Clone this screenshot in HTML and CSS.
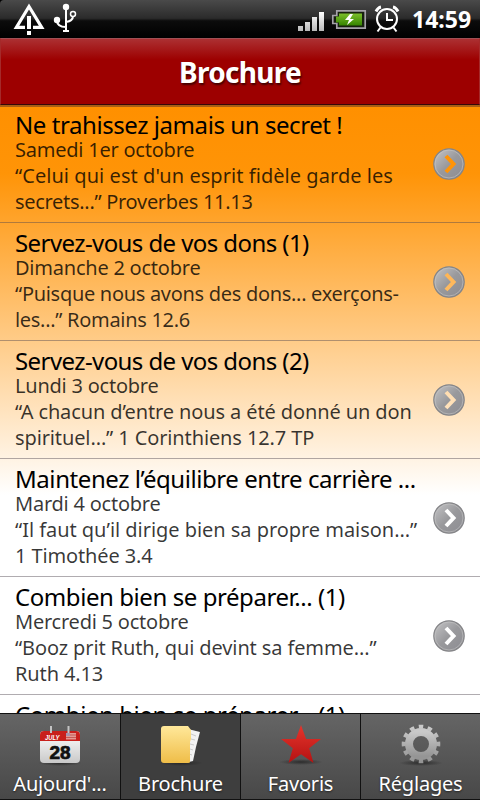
FILE: index.html
```html
<!DOCTYPE html>
<html lang="fr">
<head>
<meta charset="utf-8">
<title>Brochure</title>
<link rel="stylesheet" href="styles.css">
</head>
<body>
<svg class="defs" width="0" height="0" aria-hidden="true">
  <defs>
    <linearGradient id="disc" x1="0" y1="0" x2="1" y2="1"><stop offset="0" stop-color="#c6c6c8"/><stop offset=".5" stop-color="#99999c"/><stop offset="1" stop-color="#8c8c92"/></linearGradient>
    <linearGradient id="bars" x1="0" y1="0" x2="0" y2="1"><stop offset="0" stop-color="#fff"/><stop offset="1" stop-color="#b8b8b8"/></linearGradient>
    <linearGradient id="green" x1="0" y1="0" x2="0" y2="1"><stop offset="0" stop-color="#7cbf2c"/><stop offset="1" stop-color="#358400"/></linearGradient>
    <linearGradient id="folder" x1="0" y1="0" x2="0" y2="1"><stop offset="0" stop-color="#ffe89a"/><stop offset="1" stop-color="#efbd48"/></linearGradient>
    <linearGradient id="star" x1="0" y1="0" x2="0" y2="1"><stop offset="0" stop-color="#e5352c"/><stop offset="1" stop-color="#b51212"/></linearGradient>
    <linearGradient id="gear" x1="0" y1="0" x2="0" y2="1"><stop offset="0" stop-color="#c9c9c9"/><stop offset="1" stop-color="#959595"/></linearGradient>
    <linearGradient id="page" x1="0" y1="0" x2="0" y2="1"><stop offset="0" stop-color="#fff"/><stop offset="1" stop-color="#c9c9c9"/></linearGradient>
    <radialGradient id="shade"><stop offset="0" stop-color="#222" stop-opacity=".8"/><stop offset="1" stop-color="#222" stop-opacity="0"/></radialGradient>
    <mask id="cut"><rect width="34" height="34" fill="#fff"/><path d="M14 9 21.500 17 14 25" fill="none" stroke="#000" stroke-width="4"/></mask>
    <symbol id="arrow" viewBox="0 0 34 34"><g mask="url(#cut)"><circle cx="17" cy="17" r="15.2" fill="url(#disc)" stroke="#858588" stroke-width="1.2"/><circle cx="17" cy="17" r="14" fill="none" stroke="#c4c4c4" stroke-opacity=".6"/></g></symbol>
  </defs>
</svg>
<header class="status">
  <svg class="left-icons" width="80" height="38" viewBox="0 0 80 38">
    <path d="M0 0H4Q0 0 0 4Z" fill="#000"/>
    <path d="M25 27.3H16.4L29 6.5 41.7 27.3H33" fill="none" stroke="#fff" stroke-width="3.2"/>
    <path d="M27 16h4v13h-4zM27 31h4v4h-4z" fill="#fff"/>
    <g fill="none" stroke="#fff" stroke-width="2"><path d="M66 7V31M57 20Q57 27 66 27M73 16Q73 21 66 22"/><circle cx="73" cy="14" r="2.5" stroke-width="1.5"/></g>
    <circle cx="66" cy="7" r="3.2" fill="#fff"/><circle cx="57" cy="20" r="3.2" fill="#fff"/><path d="M63 30h6v2h-6z" fill="#fff"/>
  </svg>
  <svg class="right-icons" width="106" height="38" viewBox="296 0 106 38">
    <path d="M298 26h5v5h-5zM305 22h5v9h-5zM312 17h5v14h-5zM319 12h5v19h-5z" fill="url(#bars)"/>
    <path d="M336.800 10.800H365.200V28.200H336.800V23.500H332.800V15.500H336.800Z" fill="#17200f" stroke="#a5a2aa" stroke-width="1.700"/>
    <path d="M339 13.500h23v12h-23v-3h-3v-6h3z" fill="url(#green)"/>
    <path d="M350 14l-5 6h4l-2 5 7-6h-4l3-5z" fill="#fff"/>
    <g fill="none" stroke="#fff" stroke-width="2"><circle cx="387" cy="19" r="10"/><path d="M387 13v7h6M380.500 27.500l-3 4M393.500 27.500l3 4"/><path d="M376 11.500q2-4 5-4.500M398 11.500q-2-4-5-4.500" stroke-width="3"/></g>
  </svg>
  <span class="clock">14:59</span>
</header>
<div class="titlebar"><h1>Brochure</h1></div>
<main class="list">
  <article class="row"><div class="text"><h2>Ne trahissez jamais un secret !</h2><p class="date">Samedi 1er octobre</p><p><span class="widest">“Celui qui est d'un esprit fidèle garde les</span><br>secrets...” Proverbes 11.13</p></div><svg class="go"><use href="#arrow"/></svg></article>
  <article class="row"><div class="text"><h2 class="narrow">Servez-vous de vos dons (1)</h2><p class="date">Dimanche 2 octobre</p><p>“Puisque nous avons des dons... exerçons-<br>les...” Romains 12.6</p></div><svg class="go"><use href="#arrow"/></svg></article>
  <article class="row"><div class="text"><h2 class="narrow">Servez-vous de vos dons (2)</h2><p class="date">Lundi 3 octobre</p><p><span class="wide">“A chacun d’entre nous a été donné un don<br>spirituel...” 1 Corinthiens 12.7 TP</span></p></div><svg class="go"><use href="#arrow"/></svg></article>
  <article class="row"><div class="text"><h2>Maintenez l’équilibre entre carrière ...</h2><p class="date">Mardi 4 octobre</p><p><span class="wider">“Il faut qu’il dirige bien sa propre maison...”</span><br><span class="wide">1 Timothée 3.4</span></p></div><svg class="go"><use href="#arrow"/></svg></article>
  <article class="row"><div class="text"><h2>Combien bien se préparer... (1)</h2><p class="date">Mercredi 5 octobre</p><p><span class="wide">“Booz prit Ruth, qui devint sa femme...”<br>Ruth 4.13</span></p></div><svg class="go"><use href="#arrow"/></svg></article>
  <article class="row"><div class="text"><h2>Combien bien se préparer... (1)</h2></div></article>
</main>
<nav class="tabs">
  <a class="tab"><svg width="48" height="48" viewBox="0 0 48 48">
    <ellipse cx="24" cy="41" rx="22" ry="3" fill="url(#shade)"/>
    <rect x="4" y="9" width="40" height="32" rx="4" fill="url(#page)"/>
    <path d="M4 19v-6q0-4 4-4h32q4 0 4 4v6z" fill="#c8201b"/>
    <path d="M30 11h10v6.500H30z" fill="#e49a92"/><path d="M30 13h10M30 15.500h10" stroke="#c65a55"/><path d="M30 11h4v3h-4z" fill="#a795ad"/>
    <path d="M15 4v7M32.500 4v7" stroke="#c4c4c4" stroke-width="2"/>
    <text x="9" y="17.500" class="month" textLength="14.500" lengthAdjust="spacingAndGlyphs">JULY</text><text x="24" y="36.500" class="day" text-anchor="middle">28</text>
  </svg><span>Aujourd'...</span></a>
  <a class="tab active"><svg width="48" height="48" viewBox="0 0 48 48">
    <ellipse cx="24" cy="41" rx="22" ry="3" fill="url(#shade)"/>
    <path d="M31 7l12 3-4 15-3 14-8 2z" fill="#f2f2f2"/><path d="M34 12l5 2M34 17l4 1M33 22l4 1M33 27l3 1M32 32l3 1" stroke="#c9c9c9"/>
    <path d="M7 4h24l3 4v9l-1 3v20q0 1-2 1H7q-3 0-3-3V7q0-3 3-3z" fill="url(#folder)"/>
  </svg><span>Brochure</span></a>
  <a class="tab"><svg width="48" height="48" viewBox="0 0 48 48">
    <ellipse cx="24" cy="40" rx="22" ry="3" fill="url(#shade)"/>
    <path d="M24 3l5.100 14H44L32.200 26.200 36.500 41 24 32.200 11.500 41l4.300-14.800L4 17h14.900z" fill="url(#star)"/>
  </svg><span>Favoris</span></a>
  <a class="tab"><svg width="48" height="48" viewBox="0 0 48 48">
    <ellipse cx="24" cy="41" rx="22" ry="3" fill="url(#shade)"/>
    <circle cx="24" cy="22" r="12" fill="none" stroke="url(#gear)" stroke-width="8"/>
    <circle cx="24" cy="22" r="17.300" fill="none" stroke="url(#gear)" stroke-width="4" pathLength="120" stroke-dasharray="5 5" stroke-dashoffset="2.500"/>
  </svg><span>Réglages</span></a>
</nav>
</body>
</html>
```
FILE: styles.css
```css
* { box-sizing: border-box; margin: 0; padding: 0; }
body { width: 480px; height: 800px; overflow: hidden; display: flex; flex-direction: column; font-family: "Noto Sans", "Open Sans", sans-serif; background: #fff; }
.defs { position: absolute; }
.status { height: 38px; flex: none; display: flex; background: linear-gradient(#4a4a4a, #2b2b2b 48%, #0c0c0c 55%, #000); }
.status svg { flex: none; }
.right-icons { margin-left: 216px; }
.clock { margin-left: 10px; color: #fff; font-weight: 700; font-size: 23px; line-height: 38px; letter-spacing: 0; white-space: nowrap; }
.titlebar { height: 67px; flex: none; border: 1px solid #a52a2a; border-top-color: #a05055; border-bottom: 1px solid #380808; background: linear-gradient(#ac3032, #9d0000 32%, #9d0000); }
h1 { text-align: center; color: #fff; font-size: 28px; line-height: 66px; letter-spacing: -0.7px; text-shadow: 1px 2px 2px #400; }
.list { height: 608px; flex: none; overflow: hidden; border-top: 2px solid #a85f14; background: linear-gradient(#ff9000, #ff9407 11%, #fff 64%); }
.row { height: 118px; padding: 5px 15px 0; display: flex; justify-content: space-between; border-bottom: 1px solid rgba(80, 70, 80, .45); }
.row:first-child { height: 116px; padding-top: 3px; }
.text { white-space: nowrap; }
h2 { color: #000; font-weight: 400; font-size: 24px; line-height: 30px; letter-spacing: -0.43px; }
h2.narrow { letter-spacing: -0.58px; }
p { color: rgba(0, 0, 0, .78); font-size: 20px; line-height: 26px; letter-spacing: -0.3px; }
.date { line-height: 20px; margin-bottom: 3px; letter-spacing: -0.23px; }
.wide { letter-spacing: -0.12px; }
.wider { letter-spacing: -0.04px; }
.widest { letter-spacing: 0.05px; }
.go { width: 34px; height: 34px; flex: none; margin: 37px -1px 0 0; }
.row:first-child .go { margin-top: 37px; }
.tabs { height: 87px; flex: none; display: grid; grid-template-columns: repeat(4, 1fr); border-top: 1px solid #111; border-bottom: 1px solid #111; }
.tab { display: flex; flex-direction: column; align-items: center; padding-top: 8px; background: linear-gradient(#656565, #484848); color: #fff; font-size: 20px; }
.tab + .tab { border-left: 1px solid #111; }
.tab.active { background: #3e3e3e; }
.tab span { line-height: 28px; text-shadow: 0 1px 2px #222; white-space: nowrap; letter-spacing: -0.2px; }
.tab svg { flex: none; }
.month { font: italic 700 7px "Liberation Sans", sans-serif; fill: #fff; }
.day { font: 700 19px "Liberation Sans", sans-serif; fill: #111; stroke: #111; stroke-width: .7px; }
```
